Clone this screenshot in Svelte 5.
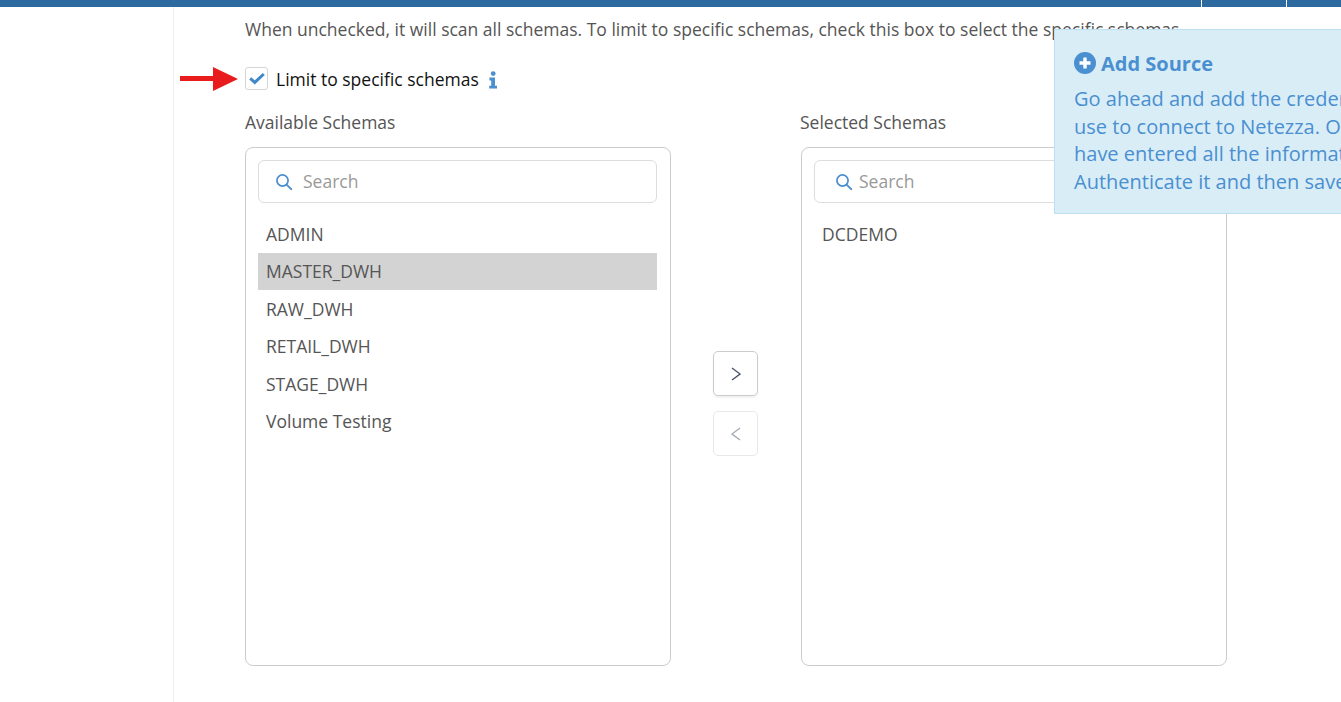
<script>
  const available = ['ADMIN', 'MASTER_DWH', 'RAW_DWH', 'RETAIL_DWH', 'STAGE_DWH', 'Volume Testing'];
  const selected = ['DCDEMO'];
</script>

{#snippet searchIcon()}
  <svg class="search-icon" viewBox="0 0 18 18" width="18" height="18" aria-hidden="true">
    <circle cx="7.5" cy="7.5" r="5.6" fill="none" stroke="#4a8fd0" stroke-width="1.7" />
    <path d="M11.6 11.6 L16.2 16.2" stroke="#4a8fd0" stroke-width="1.9" stroke-linecap="round" />
  </svg>
{/snippet}

{#snippet panel(items, active, inputClass)}
  <div class="panel">
    <div class={'search ' + inputClass}>
      {@render searchIcon()}
      <span class="placeholder">Search</span>
    </div>
    <ul>
      {#each items as item}
        <li class:active={item === active}>{item}</li>
      {/each}
    </ul>
  </div>
{/snippet}

<div class="page">
  <header class="topbar">
    <span class="tab-a"></span>
    <span class="tab-b"></span>
  </header>
  <div class="body">
    <aside class="side"></aside>
    <main class="content">
      <p class="hint">When unchecked, it will scan all schemas. To limit to specific schemas, check this box to select the specific schemas.</p>
      <div class="check-row">
        <span class="checkbox">
          <svg viewBox="0 0 16 14" width="16" height="14" aria-hidden="true">
            <path d="M1.2 6.4 L5.8 10.4 L14.8 2" fill="none" stroke="#3f88c9" stroke-width="3" />
          </svg>
        </span>
        <span class="check-label">Limit to specific schemas</span>
        <svg class="info" viewBox="0 0 8 18" width="8" height="18" aria-hidden="true">
          <circle cx="4.2" cy="2.6" r="2.4" fill="#4a8fd0" />
          <path d="M0.4 6.6 H6 V14.8 H8 V17.6 H0.2 V14.8 H2.2 V9.4 H0.4 Z" fill="#4a8fd0" />
        </svg>
      </div>
      <div class="columns">
        <section class="col">
          <h3>Available Schemas</h3>
          {@render panel(available, 'MASTER_DWH', '')}
        </section>
        <div class="mover">
          <button class="move">
            <svg viewBox="0 0 10 14" width="10" height="14" aria-hidden="true"><path d="M1 1 L9 7 L1 13" fill="none" stroke="#4a5568" stroke-width="1.4" /></svg>
          </button>
          <button class="move off">
            <svg viewBox="0 0 10 14" width="10" height="14" aria-hidden="true"><path d="M9 1 L1 7 L9 13" fill="none" stroke="#a5abb5" stroke-width="1.4" /></svg>
          </button>
        </div>
        <section class="col right">
          <h3>Selected Schemas</h3>
          {@render panel(selected, '', 'narrow')}
        </section>
      </div>
    </main>
  </div>

  <svg class="arrow" viewBox="0 0 58 24" width="58" height="24" aria-hidden="true">
    <path d="M0 9 H33 V0 L58 12 L33 24 V14 H0 Z" fill="#e81c1c" />
  </svg>

  <div class="tip">
    <div class="tip-title">
      <svg viewBox="0 0 22 22" width="22" height="22" aria-hidden="true">
        <circle cx="11" cy="11" r="11" fill="#4a8fd0" />
        <path d="M11 5.5 V16.5 M5.5 11 H16.5" stroke="#fff" stroke-width="3.4" />
      </svg>
      <span>Add Source</span>
    </div>
    <p>Go ahead and add the credentials you<br />use to connect to Netezza. Once you<br />have entered all the information,<br />Authenticate it and then save it.</p>
  </div>
</div>

<style>
  :global(body) {
    margin: 0;
    background: #fff;
    overflow: hidden;
  }
  .page {
    position: relative;
    width: 1341px;
    height: 702px;
    overflow: hidden;
    font-family: "Open Sans", sans-serif;
    font-size: 17.5px;
    color: #555;
  }
  .topbar {
    display: flex;
    justify-content: flex-end;
    height: 7px;
    background: #2d6a9f;
  }
  .tab-a {
    width: 84px;
    border-left: 1px solid #fff;
  }
  .tab-b {
    width: 54px;
    border-left: 1px solid #fff;
  }
  .body {
    display: flex;
    height: 695px;
  }
  .side {
    flex: none;
    width: 173px;
    border-right: 1px solid #eee;
  }
  .content {
    flex: 1;
    padding-left: 71px;
    min-width: 0;
  }
  .hint {
    margin: 10px 0 0;
    line-height: 25px;
    white-space: nowrap;
  }
  .check-row {
    display: flex;
    align-items: center;
    margin-top: 25px;
    height: 23px;
  }
  .checkbox {
    display: flex;
    align-items: center;
    justify-content: center;
    box-sizing: border-box;
    width: 23px;
    height: 23px;
    border: 1px solid #d5d5d5;
    border-radius: 3px;
  }
  .check-label {
    margin: 2px 0 0 8px;
    color: #111;
    line-height: 25px;
  }
  .info {
    margin: 2px 0 0 10px;
  }
  .columns {
    display: flex;
    margin-top: 20px;
  }
  .col {
    flex: none;
    width: 426px;
  }
  .col.right {
    margin-left: 43px;
  }
  h3 {
    margin: 0 0 12px;
    font-size: 17.5px;
    font-weight: 400;
    line-height: 25px;
  }
  .right h3 {
    margin-left: -1px;
  }
  .panel {
    box-sizing: border-box;
    height: 519px;
    padding: 12px 13px 11px 12px;
    border: 1px solid #ccc;
    border-radius: 8px;
  }
  .search {
    display: flex;
    align-items: center;
    box-sizing: border-box;
    height: 43px;
    padding-left: 16px;
    border: 1px solid #ddd;
    border-radius: 6px;
  }
  .search.narrow {
    padding-left: 20px;
  }
  .placeholder {
    margin: 0 0 2px 10px;
    color: #999;
  }
  .narrow .placeholder {
    margin-left: 6px;
  }
  .search-icon {
    flex: none;
  }
  ul {
    margin: 12px 0 0;
    padding: 0;
    list-style: none;
  }
  li {
    display: flex;
    align-items: center;
    height: 37.5px;
    padding-left: 8px;
  }
  li.active {
    background: #d3d3d3;
  }
  .mover {
    flex: none;
    display: flex;
    flex-direction: column;
    gap: 15px;
    width: 45px;
    margin: 241px 0 0 42px;
  }
  .move {
    display: flex;
    align-items: center;
    justify-content: center;
    width: 45px;
    height: 45px;
    padding: 0;
    background: #fff;
    border: 1px solid #ccc;
    border-radius: 5px;
    box-shadow: 0 2px 2px rgba(0, 0, 0, 0.06);
  }
  .move.off {
    border-color: #e8e8e8;
    box-shadow: none;
  }
  .arrow {
    position: absolute;
    left: 180px;
    top: 67px;
  }
  .tip {
    position: absolute;
    left: 1054px;
    top: 29px;
    box-sizing: border-box;
    width: 420px;
    height: 185px;
    padding: 20px 19px;
    background: #d9edf7;
    border: 1px solid #bcdff1;
    color: #4a8fd0;
    white-space: nowrap;
  }
  .tip-title {
    display: flex;
    align-items: center;
    gap: 5px;
    height: 26px;
    font-size: 20px;
    font-weight: 700;
  }
  .tip p {
    margin: 9px 0 0;
    font-size: 20px;
    line-height: 27.5px;
  }
</style>
